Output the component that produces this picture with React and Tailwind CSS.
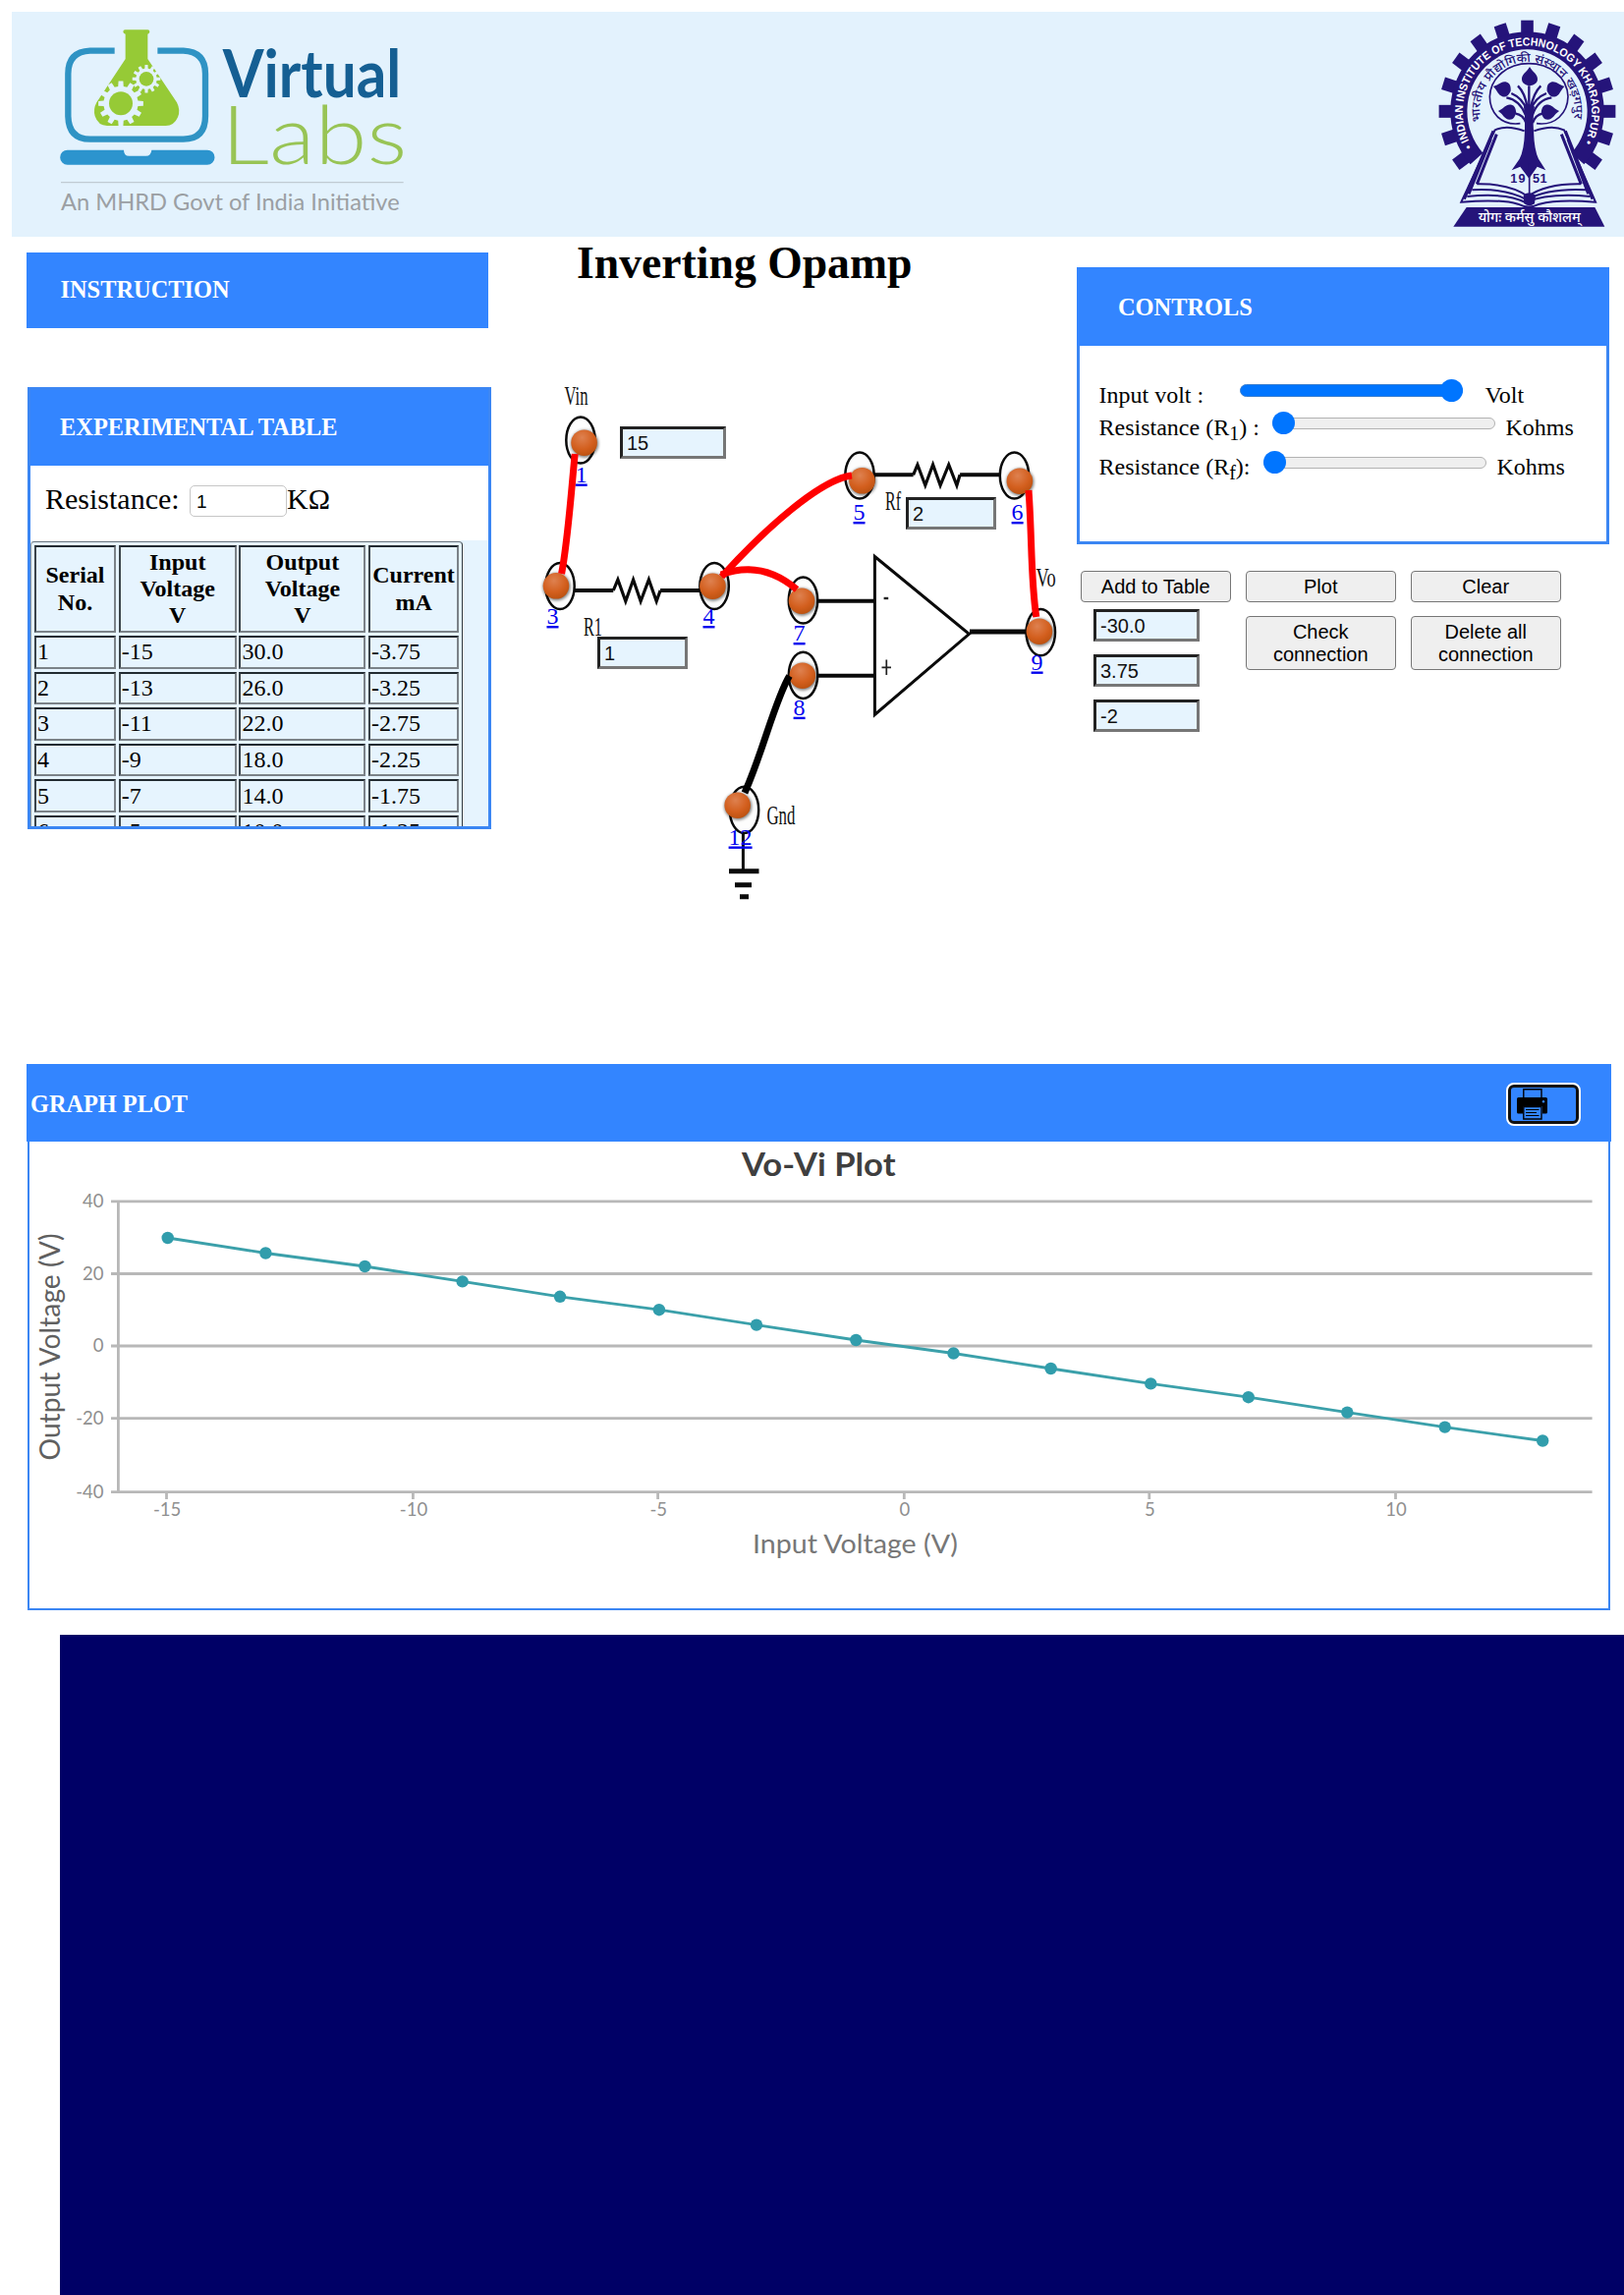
import React from "react";

const ROWS = [
  ["1", "-15", "30.0", "-3.75"],
  ["2", "-13", "26.0", "-3.25"],
  ["3", "-11", "22.0", "-2.75"],
  ["4", "-9", "18.0", "-2.25"],
  ["5", "-7", "14.0", "-1.75"],
  ["6", "-5", "10.0", "-1.25"],
];

const HEADS = [
  ["Serial", "No."],
  ["Input", "Voltage", "V"],
  ["Output", "Voltage", "V"],
  ["Current", "mA"],
];

const POINTS = [
  [170.7, 1260], [270.4, 1275.5], [371.4, 1289], [470.7, 1304.4], [570, 1319.8],
  [670.9, 1333.2], [770, 1348.6], [871.3, 1364], [970.5, 1377.5], [1069.6, 1393],
  [1171.3, 1408.4], [1270.7, 1422.2], [1371.3, 1437.6], [1470.7, 1452.6], [1570.2, 1466.5],
];

const GRID = [["40", 1222.9], ["20", 1296.5], ["0", 1370], ["-20", 1443.6], ["-40", 1518.7]];
const TICKS = [["-15", 169.5], ["-10", 420.4], ["-5", 669.6], ["0", 920.3], ["5", 1169.8], ["10", 1420.5]];

// [label, ring x, ring y, ball x, ball y, label x, label baseline]
const NODES = [
  ["1", 591, 448, 594.6, 450.7, 591.7, 490.5],
  ["3", 570, 596.5, 566, 596.3, 562.5, 635],
  ["4", 727.1, 596.5, 725.4, 596.7, 721.5, 635],
  ["5", 875, 484, 877.5, 489.3, 874.5, 529],
  ["6", 1032.5, 484, 1037.9, 489.7, 1035.6, 529],
  ["7", 817.5, 611, 816, 611.7, 813.6, 652],
  ["8", 817.5, 687.3, 816.8, 687.7, 813.6, 727.7],
  ["9", 1059.3, 643.6, 1057.9, 642.7, 1055.6, 681.5],
  ["12", 757.5, 824.4, 750.7, 819.7, 753.6, 859.5],
];

function gearPath(cx, cy, rIn, rOut, n) {
  const pts = [];
  const step = (Math.PI * 2) / n;
  for (let i = 0; i < n; i++) {
    const a = i * step - Math.PI / 2;
    [[-0.3, rIn], [-0.2, rOut], [0.2, rOut], [0.3, rIn]].forEach(([f, r]) => {
      pts.push(`${(cx + r * Math.cos(a + f * step)).toFixed(1)} ${(cy + r * Math.sin(a + f * step)).toFixed(1)}`);
    });
  }
  return "M" + pts.join("L") + "Z";
}

function VirtualLabsLogo() {
  return (
    <svg className="block h-[229px] w-[420px]" viewBox="36 36 1260 687">
      <path d="M350 155H275Q208 158 208 225V355Q210 425 275 425H560Q627 425 627 355V225Q627 158 560 155H481" fill="none" stroke="#2f93c4" strokeWidth="19" />
      <path d="M206 458H378Q378 476 394 476H446Q461 476 463 458H633A22 22 0 0 1 633 503H206A22 22 0 0 1 206 458Z" fill="#2c94ce" />
      <path d="M382 91H451Q457 91 457 97Q457 103 451 104V180L540 313Q552 337 543 358Q532 384 506 384H327Q300 384 290 355Q284 333 295 313L383 180V104Q376 103 376 97Q376 91 382 91Z" fill="#96ca36" />
      <path d={gearPath(369, 316, 53, 69, 12)} fill="#e3f2fd" />
      <circle cx="369" cy="316" r="36" fill="#96ca36" />
      <path d={gearPath(447, 241, 32, 43, 12)} fill="#e3f2fd" />
      <circle cx="447" cy="241" r="22" fill="#96ca36" />
      <text x="680" y="297" fontFamily="Lato" fontWeight="700" fontSize="203" fill="#155f93" textLength="545" lengthAdjust="spacingAndGlyphs">Virtual</text>
      <text x="676" y="502" fontFamily="Lato" fontWeight="300" fontSize="248" fill="#98c455" textLength="567" lengthAdjust="spacingAndGlyphs">Labs</text>
      <path d="M186 557H1232" stroke="#c0cbd3" strokeWidth="4" />
      <text x="186" y="643" fontFamily="Lato" fontSize="71" fill="#9b9fa3" textLength="1034" lengthAdjust="spacingAndGlyphs">An MHRD Govt of India Initiative</text>
    </svg>
  );
}

function Leaf({ t }) {
  return <path transform={t} d="M0 -34C10 -16 25 -12 24 5C23 18 10 22 0 24C-10 22 -23 18 -24 5C-25 -12 -10 -16 0 -34Z" />;
}

function InstituteSeal() {
  const c = "#25147a";
  const teeth = [];
  for (let i = -7; i <= 7; i++) teeth.push(i * 18);
  return (
    <svg className="block h-[229px] w-[223px]" viewBox="0 36 669 687" fill={c}>
      <defs>
        <path id="sealOuter" d="M201 449A203 203 0 1 1 546 449" />
        <path id="sealInner" d="M229 375A149 149 0 1 1 518 375" />
      </defs>
      <g transform="translate(11.2 0) scale(.97 1)">
        {teeth.map((a) => (
          <rect key={a} x="354" y="62" width="39" height="46" transform={`rotate(${a} 373.5 340)`} />
        ))}
        <path d="M194.5 502A242 242 0 1 1 552.5 502L513 467A189 189 0 1 0 234 467Z" />
        <text fill="#fff" fontFamily="Liberation Sans" fontWeight="700" fontSize="35">
          <textPath href="#sealOuter" textLength="846" startOffset="1" lengthAdjust="spacingAndGlyphs">• INDIAN INSTITUTE OF TECHNOLOGY KHARAGPUR •</textPath>
        </text>
        <text fontFamily="Noto Sans, sans-serif" fontWeight="500" fontSize="37">
          <textPath href="#sealInner" startOffset="4" textLength="524" lengthAdjust="spacingAndGlyphs">भारतीय प्रौद्योगिकी संस्थान खड़गपुर</textPath>
        </text>
      </g>
      <path d="M352 377C290 385 259 340 259 295C262 235 315 194 378 194C442 194 496 235 498 295C497 345 460 385 402 377" fill="none" stroke={c} strokeWidth="5" />
      <Leaf t="translate(381 238)" />
      <Leaf t="translate(301 272) rotate(-75) scale(.95)" />
      <Leaf t="translate(456 272) rotate(75) scale(.95)" />
      <Leaf t="translate(317 342) rotate(-85) scale(.95)" />
      <Leaf t="translate(439 342) rotate(85) scale(.95)" />
      <g fill="none" stroke={c} strokeWidth="7">
        <path d="M379 262V330M325 285Q360 300 371 335M432 285Q395 300 386 335M310 298Q350 305 368 350M448 298Q405 305 390 350M345 262Q368 285 374 330M415 262Q392 285 384 330M338 347Q360 350 370 375M420 347Q400 350 390 375" />
      </g>
      <path d="M363 325H396Q390 360 393 400Q395 460 408 485L430 520L404 509L379 545L352 509L326 520L350 485Q364 460 366 400Q368 360 363 325Z" />
      <path d="M365 400Q310 380 275 397L172 617Q290 607 345 623Q378 640 411 623Q470 607 582 617L486 397Q450 380 394 400" fill="none" stroke={c} strokeWidth="6" />
      <g fill="none" stroke={c}>
        <path d="M270 400L181 608M262 425L195 592M280 410L220 562" strokeWidth="9" />
        <path d="M490 400L573 608M498 425L560 592M478 410L538 562" strokeWidth="9" />
        <path d="M220 562Q320 560 376 600Q430 560 538 562M205 580Q310 574 372 610Q440 574 552 580M190 600Q310 588 368 618Q440 588 566 600" strokeWidth="6" />
        <path d="M380 500V600" strokeWidth="5" />
      </g>
      <path d="M362 596Q380 582 399 596L396 622Q380 634 364 622Z" />
      <text x="322" y="558" fontFamily="Liberation Sans" fontWeight="700" fontSize="38" textLength="46">19</text>
      <text x="390" y="558" fontFamily="Liberation Sans" fontWeight="700" fontSize="38" textLength="44">51</text>
      <path d="M188 633H580L610 692H148Z" />
      <text x="224" y="677" fill="#fff" fontFamily="Noto Sans, sans-serif" fontWeight="500" fontSize="41" textLength="312" lengthAdjust="spacingAndGlyphs">योगः कर्मसु कौशलम्</text>
    </svg>
  );
}

function Field({ value, className }) {
  return (
    <div className={"flex h-[33px] items-center border-[3px] border-t-[#222] border-l-[#222] border-r-[#767676] border-b-[#767676] bg-[#e6f4fe] pl-[4px] font-['Liberation_Sans',sans-serif] text-[20px] leading-none text-[#111] " + className}>
      {value}
    </div>
  );
}

function Btn({ children, className }) {
  return (
    <button className={"w-[152.500px] rounded-[4px] border-[1.5px] border-[#767676] bg-[#efefef] font-['Liberation_Sans',sans-serif] text-[20px] leading-[23px] text-black " + className}>
      {children}
    </button>
  );
}

function Slider({ full }) {
  return (
    <div className="relative mb-[9px] flex h-[23px] w-[227px] shrink-0 items-center">
      <div className={full ? "h-[13px] w-full rounded-full border border-[#3a7fd0] bg-[#0075ff]" : "h-[12px] w-full rounded-full border border-[#b2b2b2] bg-[#efefef]"} />
      <div className={"absolute top-0 size-[23px] rounded-full bg-[#0075ff] " + (full ? "right-0" : "left-0")} />
    </div>
  );
}

function Circuit() {
  const label = { fontFamily: "Liberation Serif", fontSize: 28, fill: "#111", lengthAdjust: "spacingAndGlyphs" };
  return (
    <svg className="block h-[700px] w-[596px]" viewBox="500 241 596 700">
      <defs>
        <radialGradient id="ball" cx="0.42" cy="0.3" r="0.75">
          <stop offset="0" stopColor="#de8150" />
          <stop offset="0.6" stopColor="#d35f1e" />
          <stop offset="1" stopColor="#b9500f" />
        </radialGradient>
        <filter id="soft" x="-50%" y="-50%" width="200%" height="200%">
          <feGaussianBlur stdDeviation="1.8" />
        </filter>
      </defs>
      <text {...label} x="574.5" y="412.3" textLength="24">Vin</text>
      <text {...label} x="594" y="646.7" textLength="19">R1</text>
      <text {...label} x="901" y="518.7" textLength="16">Rf</text>
      <text {...label} x="1054.6" y="597.3" textLength="20">Vo</text>
      <text {...label} x="780.4" y="839.3" textLength="29">Gnd</text>
      <g fill="none" stroke="#0a0a0a" strokeWidth="4">
        <path d="M585 601H624.3M672.1 601H712M890 483.3H929.6M977.1 483.3H1018M833 611.7H890M833 687.7H890" />
        <path d="M987 643H1044" strokeWidth="5" />
        <path d="M624.3 601L628.9 590L636.8 612L644.6 590L652.1 612L660.4 590L668.2 612L672.1 601M929.6 483.3L933.9 473L941.8 494L949.6 473L957.1 494L965.7 473L973.9 494L977.1 483.3" strokeWidth="3.2" />
        <path d="M890.4 566.5V727.5L986.4 645.3Z" strokeWidth="3" />
        <path d="M756.4 848V886" strokeWidth="3" />
        <path d="M742 886.7H772.5M748 900.7H765M753 912.7H762" strokeWidth="5" />
      </g>
      <path d="M899.6 609H904.2" stroke="#222" strokeWidth="2.4" />
      <path d="M897.5 679.3H907M902.3 671.5V687" stroke="#222" strokeWidth="1.7" />
      {NODES.map((n) => (
        <ellipse key={n[0]} cx={n[1]} cy={n[2]} rx="14.7" ry="23.6" fill="#fdfdfd" stroke="#0a0a0a" strokeWidth="2.5" />
      ))}
      <g fill="#0000ee" fontFamily="Liberation Serif" fontSize="24" textAnchor="middle" textDecoration="underline">
        {NODES.map((n) => (
          <text key={n[0]} x={n[5]} y={n[6]}>{n[0]}</text>
        ))}
      </g>
      {NODES.map((n) => (
        <g key={n[0]}>
          <circle cx={n[3] + 0.5} cy={n[4] + 1} r="14" fill="#000" opacity="0.5" filter="url(#soft)" />
          <circle cx={n[3]} cy={n[4]} r="13.3" fill="url(#ball)" />
        </g>
      ))}
      <g fill="none" stroke="#f00" strokeWidth="7">
        <path d="M585.2 462C581 505 578 550 571.6 584" />
        <path d="M734.5 587C779 538 835 488 867 484" />
        <path d="M734 585C758 576 785 578 811 600" />
        <path d="M1047 499C1050.5 545 1049 590 1054.8 628" />
      </g>
      <path d="M803.5 688C789 712 777 764 758 807" fill="none" stroke="#000" strokeWidth="7" />
    </svg>
  );
}

function Chart() {
  return (
    <svg className="block h-[470px] w-[1605px] font-[Lato]" viewBox="30 1162 1605 470">
      <g stroke="#b8b8b8" strokeWidth="2.8">
        {GRID.map(([t, y]) => <path key={t} d={`M113 ${y}H1620.6`} />)}
        {TICKS.map(([t, x]) => <path key={t} d={`M${x} 1518V1526`} />)}
        <path d="M120.4 1222V1519" />
      </g>
      <g fontSize="18.5" fill="#8f8f8f">
        {GRID.map(([t, y]) => <text key={t} x="105.5" y={y + 6.3} textAnchor="end">{t}</text>)}
        {TICKS.map(([t, x]) => <text key={t} x={x + 0.6} y="1542.8" textAnchor="middle">{t}</text>)}
      </g>
      <polyline points={POINTS.map((p) => p.join(",")).join(" ")} fill="none" stroke="#3ba0aa" strokeWidth="2.8" />
      {POINTS.map((p) => <circle key={p[0]} cx={p[0]} cy={p[1]} r="6.2" fill="#319dac" />)}
      <text x="755" y="1196.8" fontSize="33" fontWeight="700" fill="#3f3f3f" textLength="156.5" lengthAdjust="spacingAndGlyphs">Vo-Vi Plot</text>
      <text x="766" y="1581" fontSize="27.5" fill="#777" textLength="209" lengthAdjust="spacingAndGlyphs">Input Voltage (V)</text>
      <text transform="translate(60.7 1486.5) rotate(-90)" fontSize="28" fill="#606060" textLength="231" lengthAdjust="spacingAndGlyphs">Output Voltage (V)</text>
    </svg>
  );
}

function PrinterIcon() {
  return (
    <svg className="h-[32px] w-[31px]" viewBox="0 0 31 32">
      <path d="M6.8 10V.8H25V10" fill="none" stroke="#000" strokeWidth="1.4" />
      <path d="M1.5 9H29.500Q31 9 31 10.500V24Q31 25.500 29.500 25.500H26V18H6V25.500H1.500Q0 25.500 0 24V10.500Q0 9 1.500 9Z" />
      <path d="M6.800 18.500H25V31H6.800Z" fill="#3385ff" stroke="#000" strokeWidth="1.400" />
      <path d="M9 21.500H22.500M9 24.500H20M9 27.500H22.500" stroke="#000" strokeWidth="1.100" />
      <circle cx="27" cy="13.300" r="1.200" fill="#3385ff" />
    </svg>
  );
}

export default function App() {
  return (
    <div className="flex h-[2336px] w-[1653px] flex-col overflow-hidden bg-white font-['Liberation_Serif',serif] text-black">
      <header className="mt-[12px] ml-[12px] flex h-[229px] shrink-0 justify-between bg-[#e3f2fd]">
        <VirtualLabsLogo />
        <InstituteSeal />
      </header>

      <main className="flex h-[842px] shrink-0">
        <div className="flex w-[500px] shrink-0 flex-col pt-[16px] pl-[27px]">
          <div className="flex h-[77px] w-[470px] items-center bg-[#3385ff] pl-[34.5px] text-[24.4px] leading-none font-bold text-white">INSTRUCTION</div>

          <section className="mt-[60px] ml-px flex h-[450px] w-[472px] flex-col overflow-hidden border-[3px] border-[#3b86f3] bg-white">
            <div className="-mx-[3px] -mt-[3px] flex h-[80px] shrink-0 items-center bg-[#3385ff] pt-[3px] pl-[33px] text-[24.4px] leading-none font-bold text-white">EXPERIMENTAL TABLE</div>
            <div className="flex h-[76px] shrink-0 items-center pb-[9px] pl-[15px] text-[30px] leading-none">
              <span className="w-[147px]">Resistance:</span>
              <span className="mb-[-5px] flex h-[32px] w-[99px] items-center rounded-[5px] border border-[#c6c6c6] pl-[6px] font-['Liberation_Sans',sans-serif] text-[19px]">1</span>
              <span>KΩ</span>
            </div>
            <div className="grow bg-[#e6f4fe] pt-px">
              <div className="flex w-[440px] flex-col gap-[3px] rounded-t-[4px] border-[1.5px] border-t-[#6c757c] border-l-[#8b949b] border-r-[#333a3f] border-b-[#333a3f] py-[3px] pl-[3px] text-[24px] leading-[27.3px]">
                <div className="grid h-[89px] grid-cols-[83px_120px_129px_92px] gap-[2.7px]">
                  {HEADS.map((h) => (
                    <div key={h[0]} className="flex flex-col items-center justify-center border-2 border-t-[#222b31] border-l-[#3b444a] border-r-[#7b8288] border-b-[#7b8288] font-bold">
                      {h.map((l) => <span key={l}>{l}</span>)}
                    </div>
                  ))}
                </div>
                {ROWS.map((r) => (
                  <div key={r[0]} className="grid h-[33.6px] grid-cols-[83px_120px_129px_92px] gap-[2.7px]">
                    {r.map((v) => (
                      <div key={v} className="flex items-center border-2 border-t-[#222b31] border-l-[#3b444a] border-r-[#7b8288] border-b-[#7b8288] pl-px">{v}</div>
                    ))}
                  </div>
                ))}
              </div>
            </div>
          </section>
        </div>

        <div className="relative w-[596px] shrink-0">
          <Circuit />
          <h1 className="absolute top-px left-[87px] text-[45.7px] leading-[52px] font-bold whitespace-nowrap">Inverting Opamp</h1>
          <Field value="15" className="absolute top-[193px] left-[131px] w-[108px]" />
          <Field value="1" className="absolute top-[407px] left-[108px] w-[92px]" />
          <Field value="2" className="absolute top-[265px] left-[422px] w-[92px]" />
        </div>

        <div className="flex w-[557px] shrink-0 flex-col pt-[31px]">
          <section className="h-[282px] w-[542px] border-[3px] border-[#3b86f3] bg-white text-[24px] leading-none">
            <div className="-mx-[3px] -mt-[3px] flex h-[80px] items-center bg-[#3385ff] pt-[2px] pl-[42px] text-[24.4px] font-bold text-white">CONTROLS</div>
            <div className="flex flex-col pt-[33.500px] pl-[19.500px]">
              <div className="flex h-[33px] items-center">
                <span className="w-[143px] shrink-0">Input volt :</span>
                <Slider full />
                <span className="ml-[23px]">Volt</span>
              </div>
              <div className="flex h-[33px] items-center">
                <span className="w-[176px] shrink-0">Resistance (R<sub className="text-[20px]">1</sub>) :</span>
                <Slider />
                <span className="ml-[11px]">Kohms</span>
              </div>
              <div className="mt-[7px] flex h-[33px] items-center">
                <span className="w-[167px] shrink-0">Resistance (R<sub className="text-[20px]">f</sub>):</span>
                <Slider />
                <span className="ml-[11px]">Kohms</span>
              </div>
            </div>
          </section>

          <div className="mt-[27px] ml-[4px] flex gap-[15.500px]">
            <div className="flex flex-col">
              <Btn className="h-[32px]">Add to Table</Btn>
              <div className="mt-[7px] ml-[13px] flex flex-col gap-[13px]">
                <Field value="-30.0" className="w-[108px]" />
                <Field value="3.75" className="w-[108px]" />
                <Field value="-2" className="w-[108px]" />
              </div>
            </div>
            <div className="flex flex-col gap-[14px]">
              <Btn className="h-[32px]">Plot</Btn>
              <Btn className="h-[55px]">Check<br />connection</Btn>
            </div>
            <div className="flex flex-col gap-[14px]">
              <Btn className="h-[32px]">Clear</Btn>
              <Btn className="h-[55px]">Delete all<br />connection</Btn>
            </div>
          </div>
        </div>
      </main>

      <section className="ml-[27.500px] h-[556px] w-[1611.500px] shrink-0 border-[2.500px] border-[#3b86f3] bg-white">
        <div className="-mx-[2.500px] -mt-[2px] flex h-[79px] items-center justify-between bg-[#3385ff] pr-[31px] pl-[4px]">
          <h2 className="pt-[3px] text-[24.300px] leading-none font-bold text-white">GRAPH PLOT</h2>
          <button className="mt-[3px] flex h-[44px] w-[76px] items-center rounded-[8px] border-2 border-white bg-white">
            <span className="flex h-full w-full items-center rounded-[6px] border-[3px] border-[#101010] bg-[#3385ff] pl-[6px]">
              <PrinterIcon />
            </span>
          </button>
        </div>
        <Chart />
      </section>

      <footer className="mt-[25px] ml-[61px] grow bg-[#000066]" />
    </div>
  );
}
